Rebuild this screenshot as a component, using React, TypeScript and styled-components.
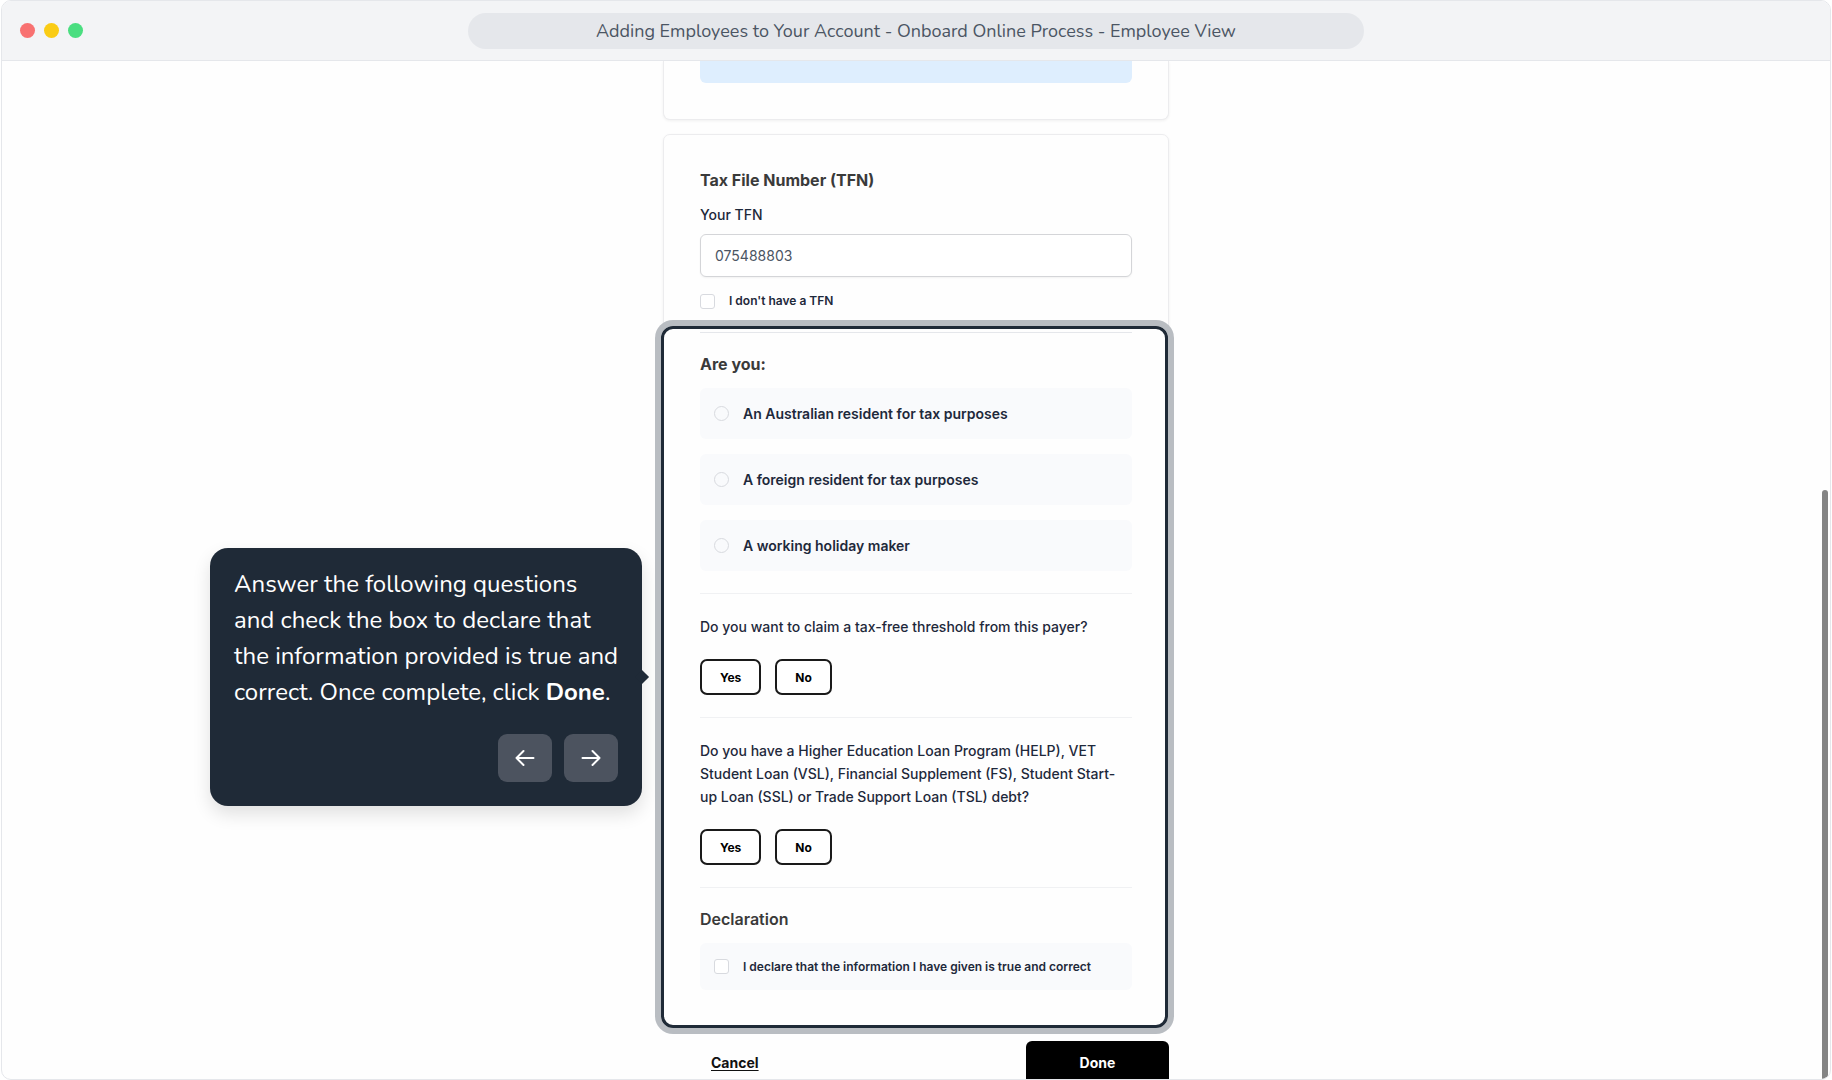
import React, { useState } from "react";
import styled, { createGlobalStyle, css } from "styled-components";

const GlobalStyle = createGlobalStyle`
  *, *::before, *::after { box-sizing: border-box; }
  body {
    margin: 0;
    background: #ffffff;
    font-family: Inter, "Liberation Sans", sans-serif;
    color: #1e293b;
  }
  button, input { font-family: inherit; }
`;

const guideFont = css`
  font-family: Nunito, Lato, "Open Sans", sans-serif;
`;

const Frame = styled.div`
  display: flex;
  flex-direction: column;
  height: 100vh;
  margin: 0 1px;
  border: 1px solid #e5e7eb;
  border-radius: 10px;
  background: #fefefe;
  overflow: hidden;
`;

const TitleBar = styled.header`
  display: grid;
  grid-template-columns: 1fr minmax(0, 896px) 1fr;
  align-items: center;
  flex: none;
  height: 60px;
  padding: 0 18px;
  background: #f3f4f6;
  border-bottom: 1px solid #e5e7eb;
`;

const Lights = styled.div`
  display: flex;
  gap: 9px;
`;

const Light = styled.span<{ $color: string }>`
  width: 15px;
  height: 15px;
  border-radius: 50%;
  background: ${(p) => p.$color};
`;

const Address = styled.div`
  ${guideFont}
  height: 36px;
  border-radius: 18px;
  background: #e5e7eb;
  color: #4b5563;
  font-size: 18px;
  line-height: 36px;
  text-align: center;
  white-space: nowrap;
  overflow: hidden;
`;

const Stage = styled.main`
  position: relative;
  display: flex;
  flex-direction: column;
  align-items: center;
  flex: 1;
  min-height: 0;
  overflow: hidden;
`;

const Column = styled.form`
  display: flex;
  flex-direction: column;
  gap: 14px;
  width: 100%;
  max-width: 506px;
`;

const Card = styled.section<{ $continued?: boolean }>`
  padding: 35px 36px 0;
  border: 1px solid #ececee;
  border-radius: 7px;
  background: #fefefe;
  box-shadow: 0 1px 3px rgba(0, 0, 0, 0.06);
  ${(p) =>
    p.$continued &&
    css`
      padding: 0 36px 36px;
      border-top: none;
      border-radius: 0 0 7px 7px;
    `}
`;

const Notice = styled.div`
  height: 22px;
  border-radius: 0 0 6px 6px;
  background: #deeefe;
`;

const Heading = styled.h2<{ $weight?: number }>`
  margin: 0;
  color: #3a3a3a;
  font-size: 16px;
  font-weight: ${(p) => p.$weight ?? 700};
  line-height: 20px;
`;

const FieldLabel = styled.label`
  display: block;
  margin-top: 14px;
  font-size: 14px;
  font-weight: 550;
  line-height: 22px;
`;

const TextField = styled.input`
  display: block;
  width: 100%;
  height: 43px;
  margin-top: 8px;
  padding: 0 14px;
  border: 1px solid #d4d5d8;
  border-radius: 6px;
  background: #ffffff;
  box-shadow: 0 1px 2px rgba(0, 0, 0, 0.05);
  color: #4b5563;
  font-size: 14px;
`;

const Check = styled.input`
  appearance: none;
  flex: none;
  width: 15px;
  height: 15px;
  margin: 0;
  border: 1px solid #d8dadf;
  border-radius: ${(p) => (p.type === "radio" ? "50%" : "3px")};
  background: ${(p) => (p.type === "radio" ? "transparent" : "#ffffff")};
  &:checked { background: #1f2a37; }
`;

const CheckLine = styled.label`
  display: flex;
  align-items: center;
  gap: 14px;
  margin-top: 13px;
  font-size: 12px;
  font-weight: 600;
  line-height: 22px;
`;

const Spotlight = styled.div`
  position: relative;
  margin: 20px -36px 0;
  padding: 0 36px 36px;

  &::after {
    content: "";
    position: absolute;
    inset: -6px 0 -2px -3px;
    border: 3px solid #1f2a37;
    border-radius: 12px;
    box-shadow: 0 0 0 6px #b9bdc2;
    pointer-events: none;
  }
`;

const Group = styled.div`
  padding: 21px 0 22px;
  border-top: 1px solid #f0f1f3;
  &:first-child { border-top-color: #e5e7eb; }
  &:last-of-type { padding-bottom: 0; }
`;

const Options = styled.div`
  display: flex;
  flex-direction: column;
  gap: 15px;
  margin-top: 14px;
`;

const Option = styled.label<{ $small?: boolean }>`
  display: flex;
  align-items: center;
  gap: 14px;
  padding: ${(p) => (p.$small ? "12px 14px" : "14px")};
  border-radius: 6px;
  background: #f9fafc;
  font-size: ${(p) => (p.$small ? 12 : 14)}px;
  font-weight: 600;
  line-height: 23px;
`;

const Question = styled.p`
  margin: 0;
  font-size: 14px;
  font-weight: 550;
  line-height: 23px;
`;

const Answers = styled.div`
  display: flex;
  gap: 14px;
  margin-top: 21px;
`;

const Answer = styled.button`
  height: 36px;
  padding: 0 18px;
  border: 2px solid #1a1a1a;
  border-radius: 7px;
  background: #ffffff;
  color: #000000;
  font-size: 12px;
  font-weight: 700;
`;

const Footer = styled.footer`
  display: flex;
  justify-content: space-between;
  align-items: center;
`;

const Cancel = styled.a`
  margin-left: 48px;
  color: #111111;
  font-size: 14px;
  font-weight: 700;
  text-decoration: underline;
  text-underline-offset: 2px;
`;

const Done = styled.button`
  width: 143px;
  height: 43px;
  border: none;
  border-radius: 6px;
  background: #000000;
  color: #ffffff;
  font-size: 14px;
  font-weight: 700;
`;

const Tip = styled.aside`
  ${guideFont}
  position: absolute;
  top: calc(50% - 2px);
  right: calc(100% + 22px);
  width: 432px;
  transform: translateY(-50%);
  padding: 18px 24px 24px;
  border-radius: 18px;
  background: #1f2a37;
  box-shadow: 0 8px 18px rgba(0, 0, 0, 0.12);
  color: #ffffff;

  &::after {
    content: "";
    position: absolute;
    top: calc(50% - 5px);
    right: -5px;
    width: 10px;
    height: 10px;
    background: inherit;
    transform: rotate(45deg);
  }
`;

const TipText = styled.p`
  margin: 0;
  font-size: 24px;
  line-height: 36px;
`;

const TipNav = styled.div`
  display: flex;
  justify-content: flex-end;
  gap: 12px;
  margin-top: 24px;
`;

const TipButton = styled.button`
  display: grid;
  place-items: center;
  width: 54px;
  height: 48px;
  padding: 0;
  border: none;
  border-radius: 9px;
  background: #4c535f;
  color: #ffffff;
`;

const ScrollThumb = styled.div`
  position: absolute;
  top: calc(42% + 1px);
  right: 2px;
  bottom: 0;
  width: 6px;
  border-radius: 3px 3px 0 0;
  background: #848484;
`;

const Arrow = ({ back }: { back?: boolean }) => (
  <svg width="20" height="18" viewBox="0 0 20 18" fill="none" stroke="currentColor" strokeWidth="2" strokeLinecap="round" strokeLinejoin="round" aria-hidden="true">
    {back ? <path d="M18.500 9H1.500M8.500 2 1.500 9l7 7" /> : <path d="M1.500 9H18.500M11.500 2l7 7-7 7" />}
  </svg>
);

const residency = [
  "An Australian resident for tax purposes",
  "A foreign resident for tax purposes",
  "A working holiday maker",
];

const YesNo = () => (
  <Answers>
    <Answer type="button">Yes</Answer>
    <Answer type="button">No</Answer>
  </Answers>
);

export default function App() {
  const [tfn, setTfn] = useState("075488803");
  return (
    <>
      <GlobalStyle />
      <Frame>
        <TitleBar>
          <Lights>
            <Light $color="#f87171" />
            <Light $color="#facc15" />
            <Light $color="#4ade80" />
          </Lights>
          <Address>Adding Employees to Your Account - Onboard Online Process - Employee View</Address>
        </TitleBar>
        <Stage>
          <Column>
            <Card $continued>
              <Notice />
            </Card>
            <Card>
              <Heading>Tax File Number (TFN)</Heading>
              <FieldLabel htmlFor="tfn">Your TFN</FieldLabel>
              <TextField id="tfn" value={tfn} onChange={(e) => setTfn(e.target.value)} />
              <CheckLine>
                <Check type="checkbox" />
                I don't have a TFN
              </CheckLine>
              <Spotlight>
                <Group>
                  <Heading>Are you:</Heading>
                  <Options>
                    {residency.map((text) => (
                      <Option key={text}>
                        <Check type="radio" name="residency" />
                        {text}
                      </Option>
                    ))}
                  </Options>
                </Group>
                <Group>
                  <Question>Do you want to claim a tax-free threshold from this payer?</Question>
                  <YesNo />
                </Group>
                <Group>
                  <Question>
                    Do you have a Higher Education Loan Program (HELP), VET Student Loan (VSL), Financial
                    Supplement (FS), Student Start-up Loan (SSL) or Trade Support Loan (TSL) debt?
                  </Question>
                  <YesNo />
                </Group>
                <Group>
                  <Heading $weight={600}>Declaration</Heading>
                  <Options>
                    <Option $small>
                      <Check type="checkbox" />
                      I declare that the information I have given is true and correct
                    </Option>
                  </Options>
                </Group>
                <Tip>
                  <TipText>
                    Answer the following questions and check the box to declare that the information provided
                    is true and correct. Once complete, click <b>Done</b>.
                  </TipText>
                  <TipNav>
                    <TipButton type="button" aria-label="Previous step">
                      <Arrow back />
                    </TipButton>
                    <TipButton type="button" aria-label="Next step">
                      <Arrow />
                    </TipButton>
                  </TipNav>
                </Tip>
              </Spotlight>
            </Card>
            <Footer>
              <Cancel href="#cancel">Cancel</Cancel>
              <Done type="button">Done</Done>
            </Footer>
          </Column>
          <ScrollThumb />
        </Stage>
      </Frame>
    </>
  );
}
